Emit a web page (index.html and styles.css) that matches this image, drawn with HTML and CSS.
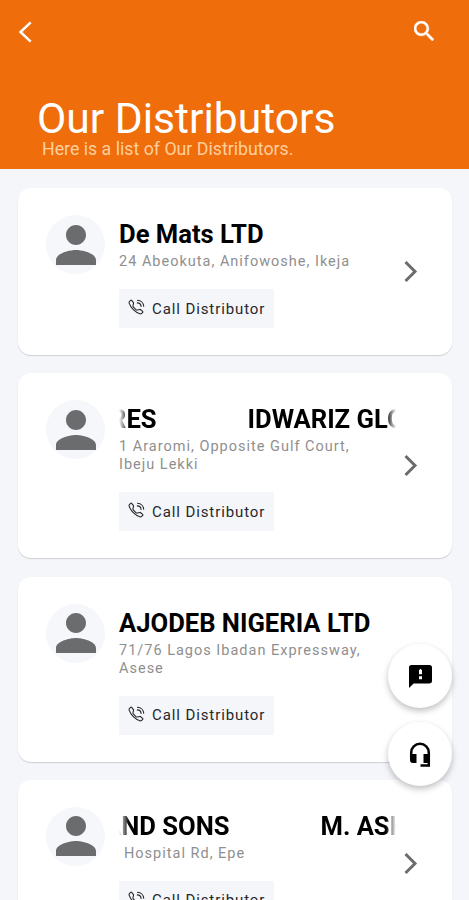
FILE: index.html
```html
<!DOCTYPE html>
<html lang="en">
<head>
    <meta charset="UTF-8">
    <meta name="viewport" content="width=device-width, initial-scale=1.0">
    <title>Our Distributors</title>
    <link rel="stylesheet" href="styles.css">
</head>
<body>
<!-- Shared icons -->
<svg class="sprite" width="0" height="0">
    <symbol id="person" viewBox="4 4 16 16">
        <path d="M12 12c2.21 0 4-1.79 4-4s-1.79-4-4-4-4 1.79-4 4 1.79 4 4 4zm0 2c-2.67 0-8 1.34-8 4v2h16v-2c0-2.66-5.33-4-8-4z"/>
    </symbol>
    <symbol id="chevron" viewBox="0 0 14 22">
        <path d="M1.5 1.5L11 11l-9.500 9.500" fill="none" stroke="currentColor" stroke-width="3"/>
    </symbol>
    <symbol id="call" viewBox="0 0 17 17">
        <g fill="none" stroke="currentColor" stroke-width="1.100" stroke-linecap="round" stroke-linejoin="round">
            <path d="M3.650 1.330a.68.68 0 0 0-1.010-.06L1.600 2.300c-.48.480-.66 1.170-.45 1.770a17.570 17.570 0 0 0 4.170 6.610 17.570 17.570 0 0 0 6.610 4.170c.6.210 1.290.03 1.770-.45l1.030-1.040a.68.68 0 0 0-.06-1.010l-2.310-1.800a.68.68 0 0 0-.58-.12l-2.190.55a1.750 1.750 0 0 1-1.660-.46L5.480 8.060a1.750 1.750 0 0 1-.46-1.660l.55-2.190a.68.68 0 0 0-.12-.58z"/>
            <path d="M9.500 1.200c3.400.2 6 2.700 6.200 6M9.300 3.900c2.200.1 3.600 1.500 3.800 3.600"/>
        </g>
    </symbol>
</svg>

<header class="header">
    <nav class="toolbar">
        <svg class="back" viewBox="0 0 14 22"><path d="M12.700 1.300L2.500 11l10.200 9.700"/></svg>
        <svg class="search" viewBox="3 3 17.500 17.500"><path d="M15.500 14h-.79l-.28-.27C15.410 12.590 16 11.110 16 9.500 16 5.910 13.090 3 9.500 3S3 5.910 3 9.500 5.910 16 9.500 16c1.610 0 3.090-.59 4.230-1.570l.27.28v.79l5 4.990L20.490 19l-4.990-5zm-6 0C7.010 14 5 11.990 5 9.500S7.010 5 9.500 5 14 7.010 14 9.500 11.990 14 9.500 14z"/></svg>
    </nav>
    <h1>Our Distributors</h1>
    <p>Here is a list of Our Distributors.</p>
</header>

<main class="list">
    <article class="card">
        <div class="avatar"><svg><use href="#person"/></svg></div>
        <div class="info">
            <h2>De Mats LTD</h2>
            <p class="address">24 Abeokuta, Anifowoshe, Ikeja</p>
            <button class="call"><svg><use href="#call"/></svg>Call Distributor</button>
        </div>
        <svg class="chevron"><use href="#chevron"/></svg>
    </article>

    <article class="card">
        <div class="avatar"><svg><use href="#person"/></svg></div>
        <div class="info">
            <h2 class="marquee marquee-res"><span>RES</span><span>IDWARIZ GLO</span></h2>
            <p class="address">1 Araromi, Opposite Gulf Court,<br>Ibeju Lekki</p>
            <button class="call"><svg><use href="#call"/></svg>Call Distributor</button>
        </div>
        <svg class="chevron"><use href="#chevron"/></svg>
    </article>

    <article class="card">
        <div class="avatar"><svg><use href="#person"/></svg></div>
        <div class="info">
            <h2>AJODEB NIGERIA LTD</h2>
            <p class="address">71/76 Lagos Ibadan Expressway,<br>Asese</p>
            <button class="call"><svg><use href="#call"/></svg>Call Distributor</button>
        </div>
        <svg class="chevron"><use href="#chevron"/></svg>
    </article>

    <article class="card">
        <div class="avatar"><svg><use href="#person"/></svg></div>
        <div class="info">
            <h2 class="marquee marquee-sons"><span>AND SONS</span><span>M. ASH</span></h2>
            <p class="address indent">Hospital Rd, Epe</p>
            <button class="call"><svg><use href="#call"/></svg>Call Distributor</button>
        </div>
        <svg class="chevron"><use href="#chevron"/></svg>
    </article>
</main>

<div class="fabs">
    <button class="fab" aria-label="Feedback">
        <svg width="23" height="23" viewBox="2 2 20 20"><path d="M20 2H4c-1.100 0-2 .9-2 2v18l4-4h14c1.100 0 2-.9 2-2V4c0-1.100-.9-2-2-2zm-6.700 12.300h-2.600v-2.600h2.600v2.600zm0-4.300h-2.600V6.500L12 5.300l1.300 1.200V10z"/></svg>
    </button>
    <button class="fab" aria-label="Support">
        <svg width="22" height="27" viewBox="0 0 22 27">
            <path d="M2.200 18v-6.500a8.800 8.800 0 0 1 17.600 0V24.500H11.500" fill="none" stroke="#000" stroke-width="2.500"/>
            <path d="M1 13h6.500v9H4a3 3 0 0 1-3-3zM14.500 13H21v9h-6.500z"/>
        </svg>
    </button>
</div>
</body>
</html>
```
FILE: styles.css
```css
* {
    box-sizing: border-box;
}
body {
    margin: 0;
    height: 900px;
    overflow: hidden;
    font-family: Roboto, "Liberation Sans", sans-serif;
    background: #f5f6fa;
    color: #000;
}
h1, h2, p {
    margin: 0;
    white-space: nowrap;
}
button {
    border: none;
    font-family: inherit;
    cursor: pointer;
}
.sprite {
    display: block;
}
.header {
    height: 169px;
    padding: 20px 35px 0 37px;
    background: #ef6d0b;
    color: #fff;
}
.toolbar {
    display: flex;
    justify-content: space-between;
    height: 77px;
    margin-left: -19px;
}
.back {
    width: 14px;
    height: 24px;
    fill: none;
    stroke: #fff;
    stroke-width: 2.5;
}
.search {
    width: 20px;
    height: 20px;
    margin-top: 1px;
    fill: #fff;
    stroke: #fff;
    stroke-width: 0.4;
}
h1 {
    font-size: 42.6px;
    font-weight: 400;
    line-height: 42px;
}
.header p {
    padding-left: 5px;
    font-size: 17.75px;
    line-height: 20px;
    color: #ffcf9f;
}
.list {
    display: flex;
    flex-direction: column;
    gap: 18.3px;
    height: 731px;
    padding: 19px 17px 0 18px;
    overflow: hidden;
}
.card {
    display: flex;
    flex-shrink: 0;
    padding: 27px 33px 27px 28px;
    background: #fff;
    border-radius: 13px;
    box-shadow: 0 1px 1px rgba(0, 0, 0, 0.16);
}
.avatar {
    display: flex;
    justify-content: center;
    align-items: center;
    width: 59px;
    height: 59px;
    margin-right: 14px;
    border-radius: 50%;
    background: #f6f7fb;
}
.avatar svg {
    width: 40px;
    height: 40px;
    fill: #6b6c6e;
}
.info {
    width: 277px;
    margin-right: 8px;
}
h2 {
    font-size: 25.6px;
    font-weight: 700;
    line-height: 38px;
}
.marquee {
    display: flex;
    overflow: hidden;
    -webkit-mask-image: linear-gradient(to right, transparent, #000 10px, #000 267px, transparent);
    mask-image: linear-gradient(to right, transparent, #000 10px, #000 267px, transparent);
}
.marquee span {
    flex-shrink: 0;
}
.marquee-res,
.marquee-sons {
    gap: 91px;
}
.marquee-res span:first-child {
    margin-left: -9px;
}
.marquee-sons span:first-child {
    margin-left: -15px;
}
.address {
    font-size: 14.5px;
    line-height: 18px;
    letter-spacing: 1px;
    color: #8f8f8f;
}
.indent {
    padding-left: 5px;
}
.call {
    display: flex;
    align-items: center;
    width: 155px;
    height: 39px;
    margin-top: 18px;
    padding: 0 0 0 9px;
    background: #f5f6fa;
    color: #26282d;
    font-size: 15px;
    letter-spacing: 0.9px;
    white-space: nowrap;
}
.call svg {
    width: 17px;
    height: 17px;
    margin: -2px 7px 0 0;
    flex-shrink: 0;
}
.chevron {
    align-self: center;
    width: 14px;
    height: 23px;
    color: #6b6c6e;
}
.fabs {
    position: fixed;
    right: 17px;
    top: 644px;
    display: flex;
    flex-direction: column;
    gap: 14px;
}
.fab {
    display: flex;
    justify-content: center;
    align-items: center;
    width: 64px;
    height: 64px;
    padding: 0;
    border-radius: 50%;
    background: #fff;
    box-shadow: 0 3px 6px rgba(0, 0, 0, 0.25);
}
```
